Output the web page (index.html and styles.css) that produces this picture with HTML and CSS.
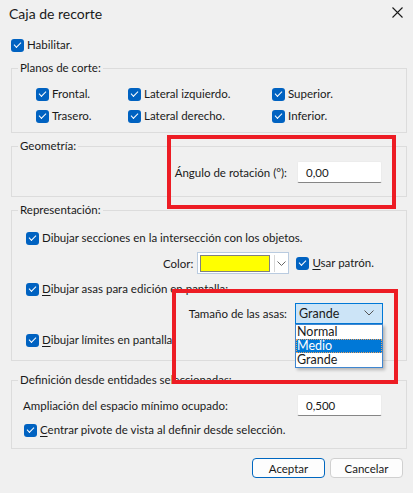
FILE: index.html
```html
<!DOCTYPE html>
<html lang="es">
<head>
  <meta charset="UTF-8">
  <title>Caja de recorte</title>
  <link rel="stylesheet" href="styles.css">
</head>
<body>

<div class="titlebar">
  <span class="title">Caja de recorte</span>
  <svg class="close" width="11" height="11" viewBox="0 0 11 11"><path d="M0.5 0.5 L10.5 10.5 M10.5 0.5 L0.5 10.5" stroke="#1a1a1a" stroke-width="1.1" fill="none"/></svg>
</div>

<div class="dialog">
  <label class="check enable"><span class="box"></span>Habilitar.</label>

  <fieldset class="group">
    <legend>Planos de corte:</legend>
    <div class="planos">
      <label class="check"><span class="box"></span>Frontal.</label>
      <label class="check"><span class="box"></span>Lateral izquierdo.</label>
      <label class="check"><span class="box"></span>Superior.</label>
      <label class="check"><span class="box"></span>Trasero.</label>
      <label class="check"><span class="box"></span>Lateral derecho.</label>
      <label class="check"><span class="box"></span>Inferior.</label>
    </div>
  </fieldset>

  <fieldset class="group">
    <legend>Geometría:</legend>
    <div class="geometria">
      <span>Ángulo de rotación (°):</span>
      <div class="textbox">0,00</div>
    </div>
  </fieldset>

  <fieldset class="group">
    <legend>Representación:</legend>
    <div class="repr">
      <div class="row r-secciones">
        <label class="check"><span class="box"></span>Dibujar secciones en la intersección con los objetos.</label>
      </div>
      <div class="row r-color">
        <span>Color:</span>
        <div class="colorpick">
          <span class="swatch"></span>
          <span class="arrowbtn"><svg width="9" height="5" viewBox="0 0 9 5"><path d="M0.5 0.5 L4.5 4.5 L8.5 0.5" stroke="#666" fill="none"/></svg></span>
        </div>
        <label class="check"><span class="box"></span><span><u>U</u>sar patrón.</span></label>
      </div>
      <div class="row r-asas">
        <label class="check"><span class="box"></span><span><u>D</u>ibujar asas para edición en pantalla:</span></label>
      </div>
      <div class="row r-tamano">
        <span>Tamaño de las asas:</span>
        <div class="combo">
          <span>Grande</span>
          <svg width="10" height="6" viewBox="0 0 10 6"><path d="M0.5 0.5 L5 5 L9.5 0.5" stroke="#555" fill="none"/></svg>
          <ul class="droplist">
            <li>Normal</li>
            <li class="selected">Medio</li>
            <li>Grande</li>
          </ul>
        </div>
      </div>
      <div class="row r-limites">
        <label class="check"><span class="box"></span><span><u>D</u>ibujar límites en pantalla.</span></label>
      </div>
    </div>
  </fieldset>

  <fieldset class="group defin">
    <legend>Definición desde entidades seleccionadas:</legend>
    <div class="seleccion">
      <div class="row r-ampliacion">
        <span>Ampliación del espacio mínimo ocupado:</span>
        <div class="textbox">0,500</div>
      </div>
      <div class="row r-centrar">
        <label class="check"><span class="box"></span><span><u>C</u>entrar pivote de vista al definir desde selección.</span></label>
      </div>
    </div>
  </fieldset>

  <div class="buttons">
    <button class="btn default">Aceptar</button>
    <button class="btn">Cancelar</button>
  </div>
</div>

<!-- marcas rojas de anotación -->
<div class="mark mark-geo"></div>
<div class="mark mark-asas"></div>

</body>
</html>
```

FILE: styles.css
```css
body {
  margin: 0;
  width: 413px;
  height: 493px;
  background-color: #f0f0f0;
  font-family: Lato, "Noto Sans", sans-serif;
  font-size: 11.5px;
  color: #1a1a1a;
  position: relative;
  overflow: hidden;
}

.titlebar {
  height: 26px;
  display: flex;
  align-items: center;
  justify-content: space-between;
  padding: 0 10px 0 9px;
}
.titlebar .title { font-size: 14px; }
.titlebar .close { margin-top: -1px; }

.dialog { padding: 0 6px 0 11px; }

/* checkboxes */
.check {
  display: flex;
  align-items: center;
  gap: 3px;
  white-space: nowrap;
  line-height: 14px;
}
.box {
  flex: none;
  width: 13px;
  height: 13px;
  border-radius: 3px;
  background-color: #0062c1;
  position: relative;
}
.box::after {
  content: "";
  position: absolute;
  left: 3px;
  top: 3px;
  width: 6px;
  height: 3px;
  border-left: 1px solid #fff;
  border-bottom: 1px solid #fff;
  transform: rotate(-45deg);
}
u { text-decoration-thickness: 1px; text-underline-offset: 2px; }

.enable { margin-top: 12px; }

/* group boxes */
.group {
  margin: 9px 0 0;
  padding: 0;
  min-width: 0;
  border: 1px solid #dcdcdc;
}
.group + .group { margin-top: 6px; }
.group.defin { margin-top: 12px; }
.group legend {
  margin-left: 6px;
  padding: 0 2px;
  line-height: 14px;
}

.planos {
  display: grid;
  grid-template-columns: 92px 144px auto;
  grid-auto-rows: 22px;
  align-items: center;
  padding: 8px 0 5px 24px;
}

.geometria {
  display: flex;
  justify-content: flex-end;
  align-items: center;
  gap: 10px;
  padding: 8px 24px 13px;
}

.textbox {
  box-sizing: border-box;
  width: 85px;
  height: 22px;
  padding: 3px 8px;
  line-height: 15px;
  background-color: #fff;
  border: 1px solid #ececec;
  border-bottom-color: #868686;
  border-radius: 2px;
}

.row { display: flex; align-items: center; }

.repr { padding: 9px 24px 4px 14px; }
.r-secciones { height: 24px; }
.r-color { height: 26px; padding-left: 137px; }
.r-color > span { margin-right: 4px; }
.r-asas { height: 26px; }
.r-tamano { height: 22px; justify-content: flex-end; gap: 8px; margin-right: -1px; }
.r-limites { height: 32px; }

.colorpick {
  box-sizing: border-box;
  width: 92px;
  height: 22px;
  display: flex;
  align-items: center;
  gap: 4px;
  padding: 0 1px 0 2px;
  background-color: #fff;
  border: 1px solid #b9cbe0;
  margin-right: 7px;
}
.swatch {
  box-sizing: border-box;
  width: 71px;
  height: 17px;
  background-color: #ffff00;
  border: 1px solid #808080;
}
.arrowbtn {
  box-sizing: border-box;
  width: 14px;
  height: 17px;
  display: flex;
  align-items: center;
  justify-content: center;
  border-left: 1px solid #d8d8d8;
}

.combo {
  box-sizing: border-box;
  position: relative;
  width: 88px;
  height: 21px;
  display: flex;
  align-items: center;
  justify-content: space-between;
  padding: 0 8px 0 3px;
  background-color: #cce4f7;
  border: 1px solid #0078d7;
  font-size: 12.5px;
}
.droplist {
  list-style: none;
  margin: 0;
  padding: 0;
  position: absolute;
  left: -1px;
  top: 20px;
  width: 88px;
  box-sizing: border-box;
  background-color: #fff;
  border: 1px solid #3f86d0;
  box-shadow: 2px 2px 3px rgba(0, 0, 0, 0.25);
}
.droplist li {
  height: 14px;
  line-height: 14px;
  padding-left: 1px;
}
.droplist li.selected {
  background-color: #0078d7;
  color: #fff;
  outline: 1px dotted #e8a060;
  outline-offset: -1px;
}

.seleccion { padding: 7px 24px 4px 11px; }
.r-ampliacion { height: 22px; justify-content: space-between; }
.r-centrar { height: 28px; padding-left: 1px; }

.buttons {
  display: flex;
  justify-content: flex-end;
  gap: 5px;
  margin-top: 9px;
  padding-right: 4px;
}
.btn {
  width: 73px;
  height: 20px;
  padding: 0;
  font-family: inherit;
  font-size: 11.5px;
  color: #1a1a1a;
  background-color: #fdfdfd;
  border: 1px solid #d0d0d0;
  border-radius: 4px;
}
.btn.default { border-color: #0067c0; }

.mark {
  position: absolute;
  box-sizing: border-box;
  border: 4px solid #ed1c24;
  pointer-events: none;
}
.mark-geo { left: 167px; top: 135px; width: 229px; height: 74px; }
.mark-asas { left: 172px; top: 289px; width: 226px; height: 95px; }
```
